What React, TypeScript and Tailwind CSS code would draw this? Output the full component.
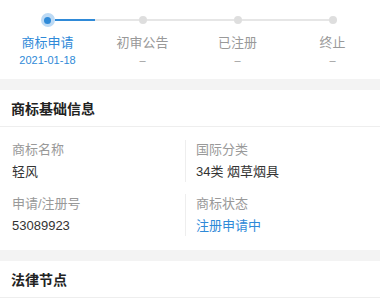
const steps = [
  { name: '商标申请', date: '2021-01-18', done: true },
  { name: '初审公告', date: '–', done: false },
  { name: '已注册', date: '–', done: false },
  { name: '终止', date: '–', done: false },
]

const fields = [
  { label: '商标名称', value: '轻风' },
  { label: '国际分类', value: '34类 烟草烟具' },
  { label: '申请/注册号', value: '53089923' },
  { label: '商标状态', value: '注册申请中', blue: true },
]

function Stepper() {
  return (
    <div className="flex pt-[13px] pb-[11px]">
      {steps.map((s, i) => (
        <div key={s.name} className="flex flex-1 flex-col items-center">
          <div className="flex h-[14px] w-full items-center">
            <div className={`h-[1.5px] flex-1 ${i === 0 ? 'bg-transparent' : 'bg-[#e6e6e6]'}`} />
            {s.done ? (
              <div className="flex h-[14px] w-[14px] items-center justify-center rounded-full bg-[#bcdaf5]">
                <div className="h-[7px] w-[7px] rounded-full bg-[#2f8ad8]" />
              </div>
            ) : (
              <div className="h-[8px] w-[8px] rounded-full bg-[#dedede]" />
            )}
            <div
              className={`h-[1.5px] flex-1 ${
                i === steps.length - 1 ? 'bg-transparent' : i === 0 ? 'bg-[#2f8ad8]' : 'bg-[#e6e6e6]'
              }`}
            />
          </div>
          <div className={`mt-[7px] text-[13px] leading-[18px] ${s.done ? 'text-[#2f8ad8]' : 'text-[#999]'}`}>
            {s.name}
          </div>
          <div className={`text-[11px] leading-[16px] ${s.done ? 'text-[#2f8ad8]' : 'text-[#999]'}`}>{s.date}</div>
        </div>
      ))}
    </div>
  )
}

function SectionHeader({ title }: { title: string }) {
  return (
    <div className="flex h-[37px] items-center border-b border-[#eeeeee] px-[11px] pt-[2px] text-[14px] font-bold text-[#222]">
      {title}
    </div>
  )
}

export default function App() {
  return (
    <div
      className="w-[380px] bg-white"
      style={{ fontFamily: '"Liberation Sans", "Noto Sans CJK SC", sans-serif' }}
    >
      <Stepper />
      <div className="h-[11px] bg-[#f3f3f3]" />
      <SectionHeader title="商标基础信息" />
      <div className="grid grid-cols-[186px_1fr] gap-y-[12px] pt-[13px] pb-[14px]">
        {fields.map((f, i) => (
          <div key={f.label} className={i % 2 === 0 ? 'pl-[12px]' : 'pl-[10px]'}>
            <div className={i % 2 === 0 ? 'border-r border-[#eeeeee]' : ''}>
              <div className="text-[13px] leading-[20px] text-[#999]">{f.label}</div>
              <div className={`mt-[2px] text-[13px] leading-[20px] ${f.blue ? 'text-[#2f8ad8]' : 'text-[#333]'}`}>
                {f.value}
              </div>
            </div>
          </div>
        ))}
      </div>
      <div className="h-[11px] bg-[#f3f3f3]" />
      <SectionHeader title="法律节点" />
    </div>
  )
}
